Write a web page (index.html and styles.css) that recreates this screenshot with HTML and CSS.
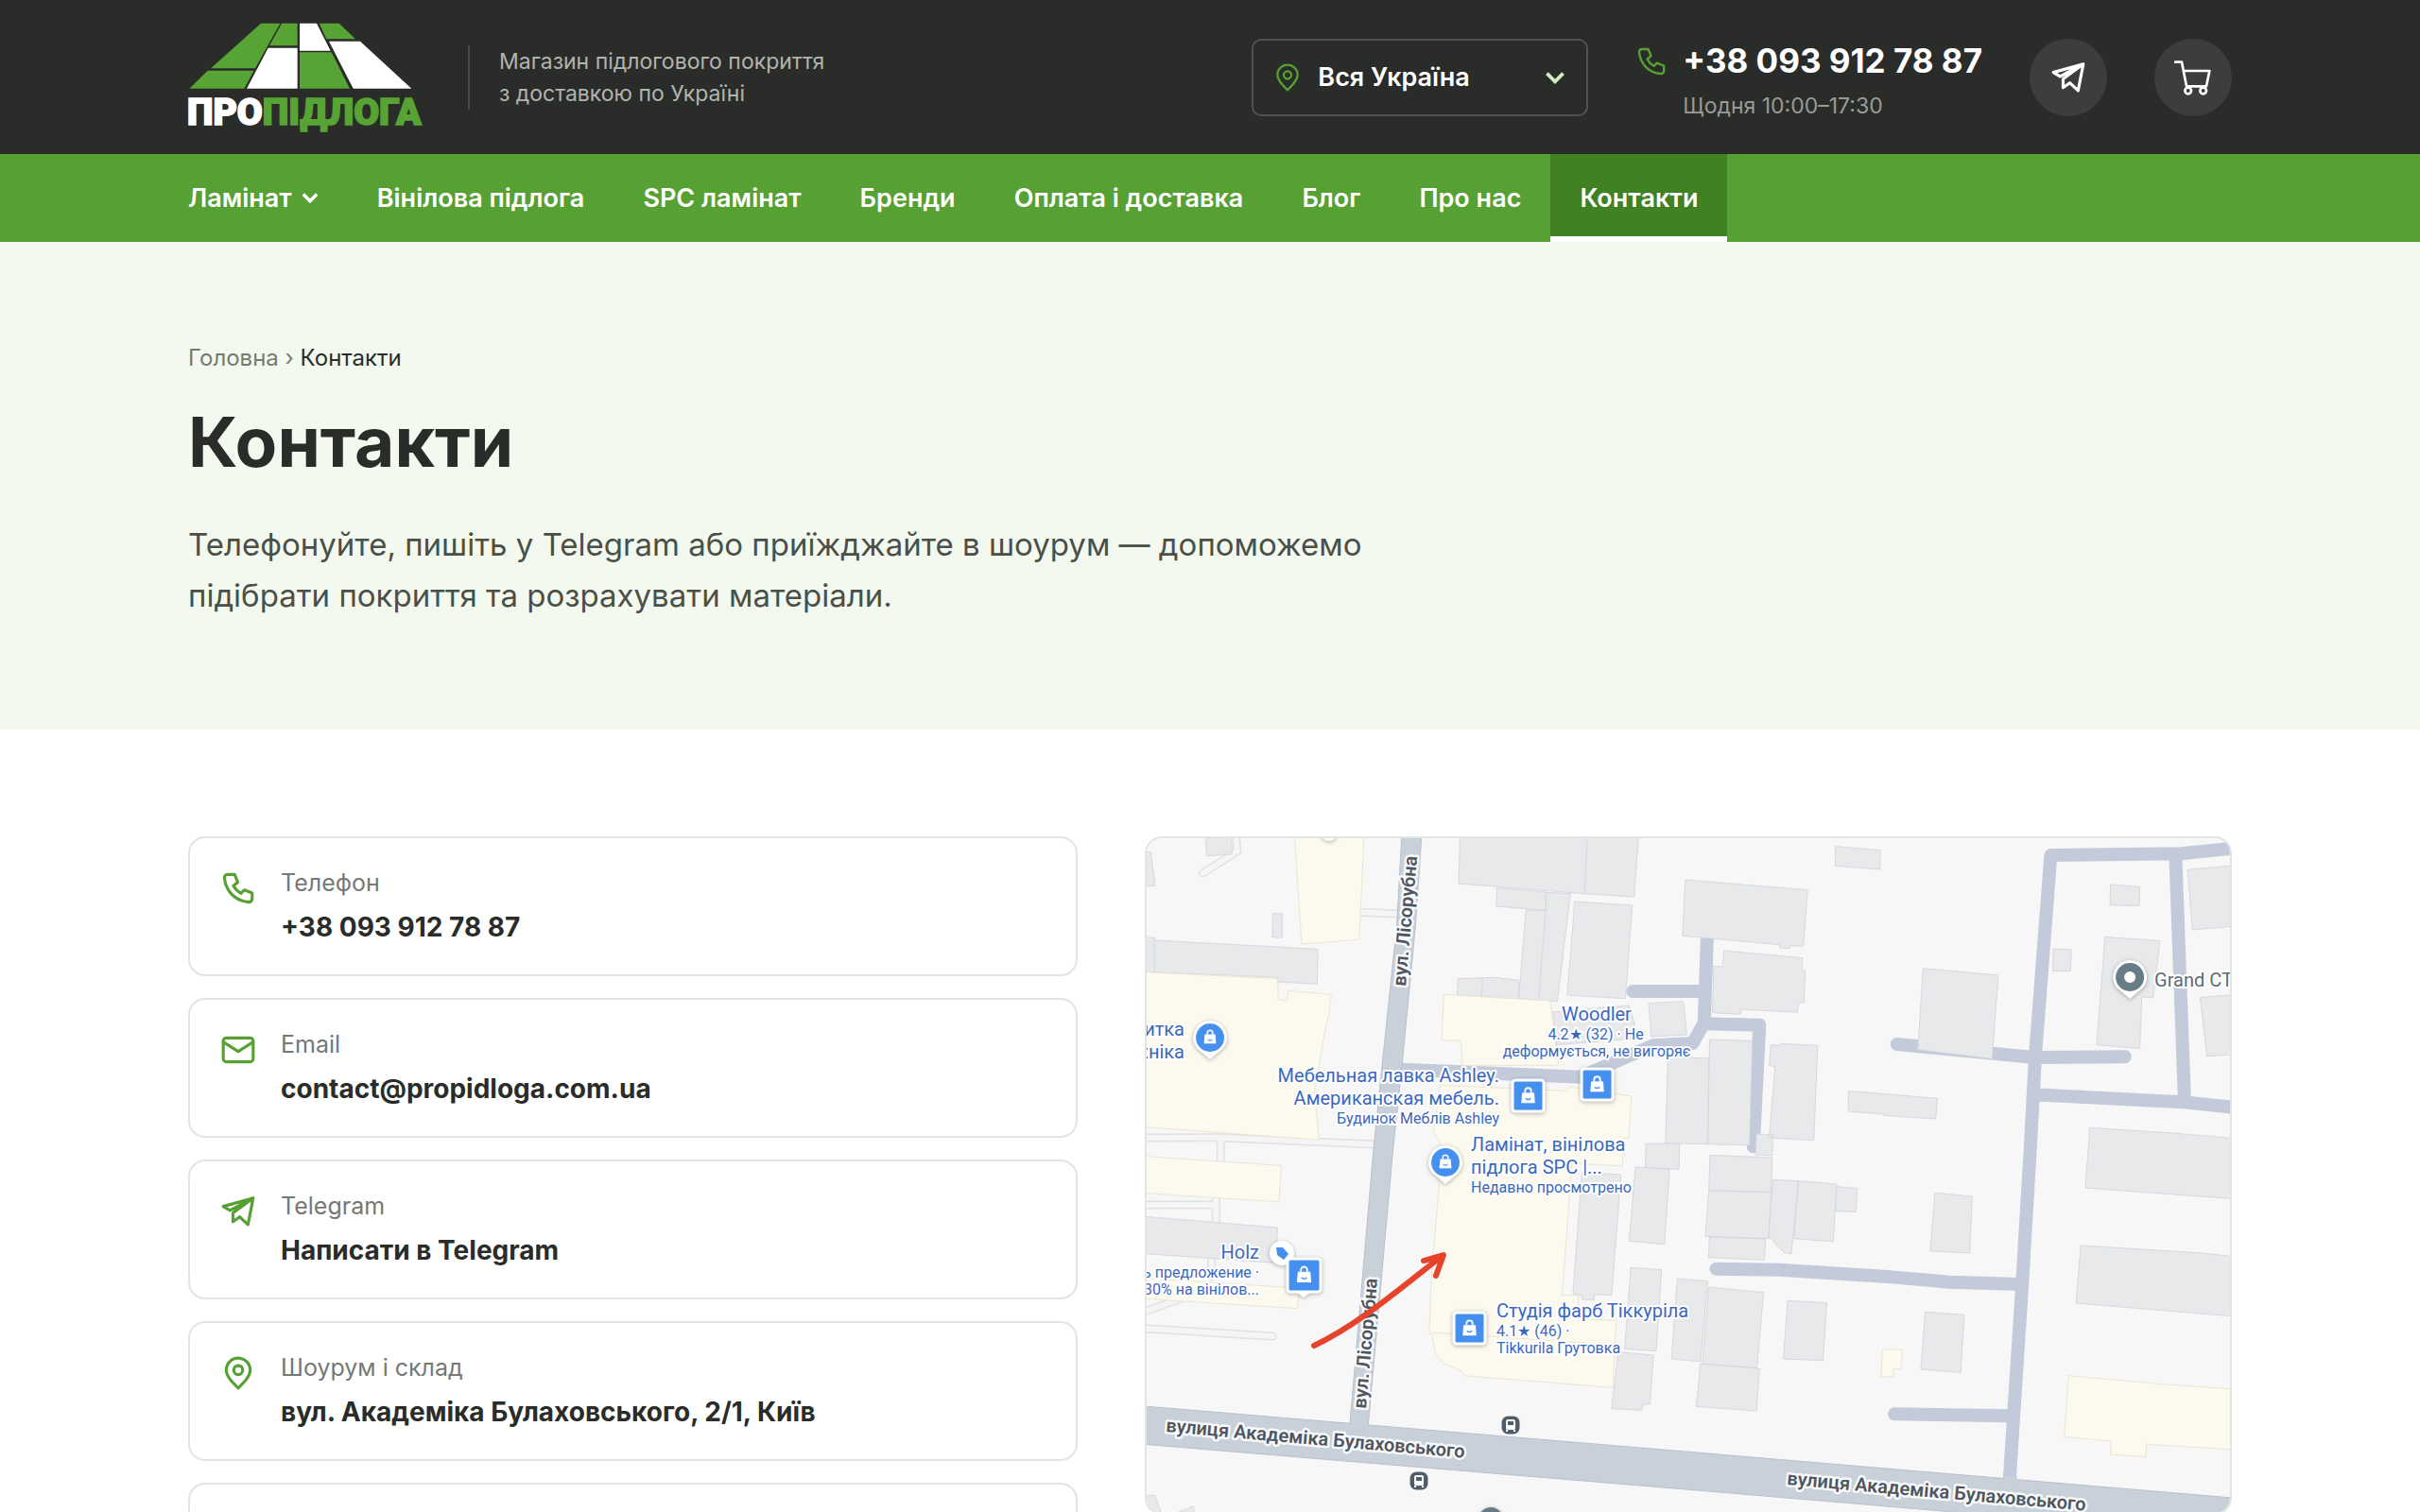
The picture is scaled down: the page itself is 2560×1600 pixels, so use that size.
FILE: index.html
```html
<!DOCTYPE html>
<html lang="uk">
<head>
<meta charset="utf-8">
<meta name="viewport" content="width=device-width, initial-scale=1">
<title>Контакти — ПроПідлога</title>
<link rel="stylesheet" href="styles.css">
</head>
<body>
<svg class="sprite" aria-hidden="true">
  <symbol id="i-phone" viewBox="0 0 24 24"><path d="M9.6 2.8H4.8a2 2 0 0 0-2 2.3C3.6 13.8 10 20.4 18.9 21.2a2.2 2.2 0 0 0 2.4-2.1v-3.9l-5.2-2.1-2.3 2.3c-2-1.1-3.8-2.9-5-5l2.9-2.5z"/></symbol>
  <symbol id="i-pin" viewBox="0 0 24 24"><path d="M12 22C7.5 17.6 4 14 4 10a8 8 0 0 1 16 0c0 4-3.500 7.600-8 12z"/><circle cx="12" cy="10" r="3"/></symbol>
  <symbol id="i-mail" viewBox="0 0 24 24"><rect x="2" y="4" width="20" height="16" rx="2"/><path d="M2.500 7 12 13l9.500-6"/></symbol>
  <symbol id="i-plane" viewBox="0 0 24 24"><path d="M2 8.600 22 3l-3.500 17.800-5.500-5.200-4.500 3.200V13L22 3 6.500 11.300z"/></symbol>
  <symbol id="i-chevron" viewBox="0 0 20 14"><path d="m2 2.500 8 8 8-8"/></symbol>
  <symbol id="m-bag" viewBox="0 0 20 22"><path class="bag-body" d="M3 8h14l1 12H2z"/><path class="bag-handle" d="M6.500 8V6a3.500 3.500 0 0 1 7 0v2"/><path class="bag-smile" d="M7 14.500q3 3 6 0"/></symbol>
  <symbol id="m-bus" viewBox="0 0 22 22"><rect x="1" y="1" width="20" height="20" rx="7" fill="#4d5c68" stroke="#fff"/><rect x="6" y="5" width="10" height="11" rx="2" fill="#fff"/><path d="M8 7h6v4H8z" fill="#4d5c68"/><path d="M7 16v2m8-2v2" stroke="#fff" stroke-width="2"/></symbol>
</svg>

<header class="header">
  <div class="wrap header-row">
    <a class="logo" href="#" aria-label="ПроПідлога">
      <svg width="246" height="116" viewBox="27 27 738 348">
        <g fill="#57a333">
          <path d="M258 29h61l-79 143H99zM89 179h147l-31 57H31zM324 29h50v71h-89zM443 29h63l52 50h-92zM381 121h101l58 115H381z"/>
        </g>
        <path fill="#fff" d="M281 107h93v129H213zM381 29h54l44 87h-98zM474 86h99l163 150H551z"/>
        <text class="logo-text" x="24" y="352"><tspan class="logo-white">ПРО</tspan><tspan class="logo-green">ПІДЛОГА</tspan></text>
      </svg>
    </a>
    <p class="tagline">Магазин підлогового покриття<br>з доставкою по Україні</p>
    <div class="region">
      <svg class="icon region-pin"><use href="#i-pin"/></svg>
      <select class="region-select" aria-label="Регіон"><option>Вся Україна</option></select>
      <svg class="icon region-arrow"><use href="#i-chevron"/></svg>
    </div>
    <div class="phone">
      <svg class="icon phone-icon"><use href="#i-phone"/></svg>
      <div>
        <a class="phone-number" href="tel:+380939127887">+38 093 912 78 87</a>
        <span class="phone-hours">Щодня 10:00–17:30</span>
      </div>
    </div>
    <a class="round" href="#" aria-label="Telegram"><svg class="icon plane"><use href="#i-plane"/></svg></a>
    <a class="round" href="#" aria-label="Кошик">
      <svg class="icon cart" viewBox="510 95 120 120"><path d="M513 106h21l15 77h63l10-49H540"/><circle cx="554" cy="197" r="10"/><circle cx="602" cy="197" r="10"/></svg>
    </a>
  </div>
</header>

<nav class="nav">
  <ul class="wrap nav-list">
    <li><a href="#">Ламінат<svg class="icon nav-arrow"><use href="#i-chevron"/></svg></a></li>
    <li><a href="#">Вінілова підлога</a></li>
    <li><a href="#">SPC ламінат</a></li>
    <li><a href="#">Бренди</a></li>
    <li><a href="#">Оплата і доставка</a></li>
    <li><a href="#">Блог</a></li>
    <li><a href="#">Про нас</a></li>
    <li><a class="active" href="#" aria-current="page">Контакти</a></li>
  </ul>
</nav>

<section class="hero">
  <div class="wrap">
    <p class="crumbs"><a href="#">Головна</a> › <span>Контакти</span></p>
    <h1>Контакти</h1>
    <p class="lead">Телефонуйте, пишіть у Telegram або приїжджайте в шоурум — допоможемо підібрати покриття та розрахувати матеріали.</p>
  </div>
</section>

<main class="wrap contacts">
  <div class="cards">
    <a class="card" href="tel:+380939127887"><svg class="icon"><use href="#i-phone"/></svg><span class="card-text"><span class="label">Телефон</span><strong>+38 093 912 78 87</strong></span></a>
    <a class="card" href="mailto:contact@propidloga.com.ua"><svg class="icon"><use href="#i-mail"/></svg><span class="card-text"><span class="label">Email</span><strong>contact@propidloga.com.ua</strong></span></a>
    <a class="card" href="#"><svg class="icon"><use href="#i-plane"/></svg><span class="card-text"><span class="label">Telegram</span><strong>Написати в Telegram</strong></span></a>
    <div class="card"><svg class="icon"><use href="#i-pin"/></svg><span class="card-text"><span class="label">Шоурум і склад</span><strong>вул. Академіка Булаховського, 2/1, Київ</strong></span></div>
    <div class="card"></div>
  </div>

  <div class="map">
    <svg viewBox="1214 888 1146 714" preserveAspectRatio="xMidYMin slice" role="img" aria-label="Мапа проїзду">
      <!-- service roads -->
      <g class="lane" transform="translate(1780 870) scale(.38265 .33333)">
        <path d="M-135 540H60M70 375 62 640 30 705-80 712-280 812-520 800-775 788M62 643l153 4-17 386"/>
        <path d="M1540 84 1380 103 1020 108 977 750 963 1050 940 1490 905 2110M1365 110l25 780M595 708l380 42 250-2M975 868l415 24 150 18"/>
        <path d="M95 1421l175 3 310 23 160 16 195 7M588 1882l317 6"/>
      </g>
      <!-- footpaths -->
      <g transform="translate(1200 870) scale(.38265 .33333)">
        <path class="path-edge" d="M283 40 287 95 192 165M628 289l110 6M10 1005l220-1 440 22M241 1008v80M228 1195v90M10 1218h218M216 1385v60M10 1609l374 26M10 1565l135-55"/>
        <path class="path-fill" d="M283 40 287 95 192 165M628 289l110 6M10 1005l220-1 440 22M241 1008v80M228 1195v90M10 1218h218M216 1385v60M10 1609l374 26M10 1565l135-55"/>
      </g>
      <!-- buildings, north-west -->
      <g class="grey" transform="translate(1200 870) scale(.38265 .33333)">
        <path d="M20 98h28l12 107-40 1zM200 40h70l2 65-70 5zM385 293h26v77l-27-2zM20 368l40 2-2 8 452 28-2 111-108-7-2-15-378-17zM58 378v100M903 40h494l-13 200-137-10-348-32zM1255 40l-8 190M1005 212l135 13v58l-137-13zM1140 226l68 4-36 342-107-9 20-281 55 1zM1140 283l-20 282M897 500l103-4 65 9v60l-170-13zM965 498l-2 58M1220 255l159 12-19 296-161-11zM1424 578l96-6 10 106-98 6zM1160 605l210-20 15 55-5 50-210 20zM1417 1023h93l-2 82-93-5z"/>
      </g>
      <g class="yellow" transform="translate(1200 870) scale(.38265 .33333)">
        <path d="M445 40h193l-14 336-159 14zM20 478l378 22 3 67 24 1 3-30 119 12-7 65-8 35-32 210 14 152-494-42zM858 550l294 20 23 205H910l-5-78-53-2z"/>
      </g>
      <!-- buildings, south-west -->
      <g class="grey" transform="translate(1200 1220) scale(.38265 .33333)">
        <path d="M1388 48l94 7-14 238-98-10zM20 204l378 36-3 112-375-30zM1240 65l108 7-26 383-47-3-2 18-33-2 2-10-27-8zM1375 367l85 7-15 258-87-7zM1340 635l98 10-10 155-20 2-3 18-83-5zM20 1090h40l18 60H20zM110 1150l55-25 5 25z"/>
      </g>
      <g class="yellow" transform="translate(1200 1220) scale(.38265 .33333)">
        <path d="M848-212l352 18v-14l176 31-6 130-15 2-3 90-140-10-27 420 45 0-2 75 107 5-10 213-410-38-10-15-50-25-20-30-10-62-7 0 4-148 23-330 5-120-20-45zM825 573l510 40M20 13l389 30-7 115-382-28zM20 400l440 32-7 65-433-32z"/>
      </g>
      <!-- buildings, north-east -->
      <g class="grey" transform="translate(1780 870) scale(.38265 .33333)">
        <path d="M10 186l338 32-12 179-36-2-2 9-26-2-2-10-268-28zM-38 750l113 2-3 273-117-3zM117 411l217 23-2 38 9 3-3 100-16 2-2 30-158-10v16l-77-5 3-148 24 2zM77 693l118 4-8 331-115-3zM246 710l26 2 3-6 101 6-11 301-123-8 16-225-16-5zM207 993l45 2-2 66-46-1zM425 80l124 12-1 61-124-11zM667 467l208 22-17 265-205-29zM461 856l246 24-5 65-142-11-3-4-97-9zM1170 367l152 13-19 180-31-2-6 164-119-12zM1185 201l81 7-1 60-81-1zM1027 405l50 3-2 68-49-1zM1398 154l142-15v193l-128 13zM1433 560l107-11v191l-88 6zM1128 973l232 17 180 18v192l-424-36z"/>
      </g>
      <!-- buildings, south-east -->
      <g class="grey" transform="translate(1780 1220) scale(.38265 .33333)">
        <path d="M-12 402l84 8-20 255-80-8zM75 429l151 17-18 240-151-14zM52 672l163 16-8 134-167-14zM78 10l172 8-3 110-172-6zM75 122l172 6-7 146-175-6zM77 270l155 6-4 67-154-8zM252 88l71 4-20 232-18-4-23-22-12-22-10-2zM323 92l105 10-9 182-109-9zM428 110l57 5-3 75-56-2zM700 130l103 11-7 180-109-7zM293 472l108 7-10 183-110-5zM673 508l108 9-10 183-110-10zM1103 297l327 23 110 14v189l-450-43z"/>
      </g>
      <g class="yellow" transform="translate(1780 1220) scale(.38265 .33333)">
        <path d="M555 626l55 2-4 62-20-2-3 26-32-1zM1069 710l261 27 210 17v192l-255-18-2 40-98-8 2-42-129-14z"/>
      </g>
      <!-- streets -->
      <g transform="translate(1200 870) scale(.38265 .33333)">
        <path class="street" d="M742 40 728 330 687 780 663 1050 597 1930h51L717 1050 742 780 780 330 797 40z"/>
        <path class="street" d="M20 1856 1568 2005 3060 2150V2270L1568 2125 20 1977z"/>
        <path class="street-join" d="M600 1900h46v30h-48zM2408 2080h35v25h-37z"/>
      </g>
      <!-- street names -->
      <g class="street-name">
        <text transform="translate(1488 1045) rotate(-85)">вул. Лісорубна</text>
        <text transform="translate(1446 1492) rotate(-85)">вул. Лісорубна</text>
        <text transform="translate(1234 1516) rotate(5)">вулиця Академіка Булаховського</text>
        <text transform="translate(1891 1572) rotate(5)">вулиця Академіка Булаховського</text>
      </g>
      <!-- hand-drawn arrow -->
      <path class="arrow" d="M1391 1425C1437 1403 1479 1367 1525 1331M1507 1335l21-6-8 22"/>
      <!-- places -->
      <g class="place">
        <g text-anchor="end">
          <text x="1254" y="1097">итка</text><text x="1254" y="1121">хніка</text>
          <text x="1587" y="1146">Мебельная лавка Ashley.</text><text x="1587" y="1170">Американская мебель.</text><text class="sub" x="1587" y="1190">Будинок Меблів Ashley</text>
          <text x="1333" y="1333">Holz</text><text class="sub" x="1333" y="1353">ь предложение ·</text><text class="sub" x="1333" y="1371">30% на вінілов...</text>
        </g>
        <g text-anchor="middle">
          <text x="1690" y="1081">Woodler</text><text class="sub" x="1689" y="1101">4.2★ (32) · Не</text><text class="sub" x="1690" y="1119">деформується, не вигоряє</text>
        </g>
        <text x="1557" y="1219">Ламінат, вінілова</text><text x="1557" y="1243">підлога SPC |...</text><text class="sub" x="1557" y="1263">Недавно просмотрено</text>
        <text x="1584" y="1395">Студія фарб Тіккуріла</text><text class="sub" x="1584" y="1415">4.1★ (46) ·</text><text class="sub" x="1584" y="1433">Tikkurila Грутовка</text>
        <text class="plain" x="2280" y="1045">Grand СТ</text>
      </g>
      <!-- markers -->
      <g class="marker">
        <path d="M1281 1081a18 18 0 0 1 14 29l-14 12-14-12a18 18 0 0 1 14-29z"/><circle cx="1281" cy="1099" r="15"/><use href="#m-bag" x="1273" y="1089" width="16" height="18"/>
        <path d="M1530 1213a18 18 0 0 1 14 29l-14 12-14-12a18 18 0 0 1 14-29z"/><circle cx="1530" cy="1231" r="15"/><use href="#m-bag" x="1522" y="1221" width="16" height="18"/>
        <rect x="1601" y="1144" width="33" height="33" rx="3"/><use href="#m-bag" x="1608" y="1150" width="19" height="20"/>
        <rect x="1674" y="1132" width="33" height="33" rx="3"/><use href="#m-bag" x="1681" y="1138" width="19" height="20"/>
        <circle class="white" cx="1357" cy="1327" r="13"/><path class="tag" d="M1351 1321l7 0 6 7-5 6-7-5z"/>
        <path d="m1372 1368 8 6 8-6z"/><rect x="1363" y="1333" width="35" height="35" rx="3"/><use href="#m-bag" x="1371" y="1339" width="19" height="21"/>
        <rect x="1539" y="1390" width="33" height="33" rx="3"/><use href="#m-bag" x="1546" y="1396" width="19" height="20"/>
        <path d="M2254 1017a18 18 0 0 1 14 29l-14 12-14-12a18 18 0 0 1 14-29z"/><circle class="slate" cx="2254" cy="1035" r="15"/><circle class="white" cx="2254" cy="1035" r="6"/>
        <circle class="white" cx="1407" cy="883" r="8"/>
        <circle class="slate" cx="1578" cy="1609" r="13"/>
      </g>
      <use href="#m-bus" x="1588" y="1498" width="22" height="22"/>
      <use href="#m-bus" x="1491" y="1557" width="22" height="22"/>
    </svg>
  </div>
</main>
</body>
</html>
```
FILE: styles.css
```css
:root {
  --dark: #2a2c29;
  --green: #57a033;
  --green-dark: #408124;
  --line: #e2e6e0;
}

* { box-sizing: border-box; }

body {
  margin: 0;
  background: #fff;
  color: var(--dark);
  font-family: Inter, "Noto Sans", sans-serif;
}

a { color: inherit; text-decoration: none; }
p, h1, ul { margin: 0; padding: 0; }

.sprite { position: absolute; width: 0; height: 0; }

.wrap {
  width: calc(100% - 48px);
  max-width: 2162px;
  margin: 0 auto;
}

.icon {
  flex: none;
  fill: none;
  stroke: var(--green);
  stroke-width: 2;
  stroke-linejoin: round;
  stroke-linecap: round;
}

/* header */
.header { background: var(--dark); color: #fff; }

.header-row {
  display: flex;
  align-items: center;
  gap: 50px;
  height: 163px;
}

.logo, .logo svg { display: block; }
.logo svg { overflow: visible; }
.logo-text { font: 900 117px Roboto, sans-serif; stroke-width: 5; }
.logo-white { fill: #fff; stroke: #fff; }
.logo-green { fill: #57a333; stroke: #57a333; }

.tagline {
  padding-left: 31px;
  border-left: 2px solid #4a4c49;
  color: #b2b4b0;
  font-size: 23px;
  line-height: 34px;
}

.region { position: relative; width: 356px; margin-left: auto; }

.region-select {
  display: block;
  width: 100%;
  height: 82px;
  padding: 0 68px;
  border: 2px solid #50534f;
  border-radius: 10px;
  background: transparent;
  color: #fff;
  font: 600 27px Inter, sans-serif;
  appearance: none;
}

.region-pin, .region-arrow { position: absolute; pointer-events: none; }
.region-pin { left: 22px; top: 25px; width: 32px; height: 32px; stroke-width: 1.700; }
.region-arrow { right: 24px; top: 34px; width: 22px; height: 15px; stroke: #d3ecc5; stroke-width: 3.500; stroke-linecap: butt; stroke-linejoin: miter; }

.phone { display: flex; align-self: flex-start; gap: 16px; padding-top: 41px; }
.phone-icon { width: 34px; height: 34px; margin-top: 7px; stroke-width: 1.700; }
.phone-number { display: block; font-size: 35px; font-weight: 700; line-height: 46px; }
.phone-hours { display: block; margin-top: 7px; color: #989b96; font-size: 23px; line-height: 36px; }

.round {
  display: grid;
  place-items: center;
  width: 82px;
  height: 82px;
  border-radius: 50%;
  background: #3c3e3b;
}
.round .icon { stroke: #fff; }
.plane { width: 38px; height: 38px; }
.cart { width: 40px; height: 40px; stroke-width: 8; }

/* navigation */
.nav { background: var(--green); }
.nav-list { display: flex; list-style: none; }
.nav-list li:first-child { margin-left: -31px; }

.nav-list a {
  display: flex;
  align-items: center;
  gap: 10px;
  height: 93px;
  padding: 6px 31px 0;
  border-bottom: 6px solid transparent;
  color: #fff;
  font-size: 27px;
  font-weight: 600;
}
.nav-list .active { background: var(--green-dark); border-bottom-color: #fff; }
.nav-arrow { width: 18px; height: 13px; stroke: #fff; stroke-width: 4; stroke-linecap: butt; stroke-linejoin: miter; }

/* hero */
.hero { padding: 103px 0 115px; background: #f3f9ee; }
.crumbs { color: #757a72; font-size: 24px; line-height: 40px; }
.crumbs span { color: var(--dark); }
h1 { margin-top: 25px; font-size: 73px; font-weight: 700; line-height: 88px; }
.lead { max-width: 1300px; margin-top: 37px; color: #4a5047; font-size: 33px; line-height: 54px; }

/* contacts */
.contacts {
  display: grid;
  grid-template-columns: 9fr 11fr;
  align-items: start;
  gap: 71px;
  padding: 113px 0;
}

.cards { display: grid; gap: 23px; }

.card {
  display: flex;
  gap: 26px;
  min-height: 148px;
  padding: 28px 32px;
  border: 2px solid var(--line);
  border-radius: 18px;
}
.card .icon { width: 38px; height: 38px; margin-top: 6px; }
.card-text { display: grid; gap: 6px; }
.label { color: #757873; font-size: 25px; line-height: 38px; }
.card strong { font-size: 28px; line-height: 44px; }

/* map */
.map {
  aspect-ratio: 1150 / 718;
  overflow: hidden;
  border: 2px solid var(--line);
  border-radius: 18px;
  background: #f8f7f8;
}
.map svg { display: block; width: 100%; height: 100%; }
.map path, .map rect { vector-effect: non-scaling-stroke; }
.lane { fill: none; stroke: #c3cbda; stroke-width: 14; stroke-linecap: round; stroke-linejoin: round; }
.path-edge, .path-fill { fill: none; stroke-linejoin: round; stroke-linecap: round; }
.path-edge { stroke: #e0e1e4; stroke-width: 9; }
.path-fill { stroke: #f5f5f6; stroke-width: 6; }
.grey { fill: #e7e9ea; stroke: #d6d8de; }
.yellow { fill: #fcf9ef; stroke: #ebe5d2; }
.street { fill: #c8d0d9; stroke: #b9c1cb; }
.street-join { fill: #c8d0d9; }
.street-name { fill: #4f5660; font: 600 20px Roboto, sans-serif; stroke: #f8f9fb; stroke-width: 5; stroke-linejoin: round; paint-order: stroke; }
.arrow { fill: none; stroke: #e5432a; stroke-width: 6; stroke-linecap: round; stroke-linejoin: round; }
.place { fill: #3a68bf; font: 400 20px Roboto, sans-serif; stroke: #fff; stroke-width: 4; stroke-linejoin: round; paint-order: stroke; }
.place .sub { font-size: 16px; }
.place .plain { fill: #5c6c76; }
.marker { fill: #fff; filter: drop-shadow(0 1px 2px rgb(0 0 0 / 30%)); }
.marker rect { fill: #4590ee; stroke: #fff; stroke-width: 3; }
.marker circle { fill: #4590ee; }
.marker .white { fill: #fff; }
.marker .slate { fill: #667d88; }
.marker .tag { fill: #4590ee; }
.bag-body { fill: #fff; }
.bag-handle { fill: none; stroke: #fff; stroke-width: 2; }
.bag-smile { fill: none; stroke: #4590ee; stroke-width: 1.500; }
```
